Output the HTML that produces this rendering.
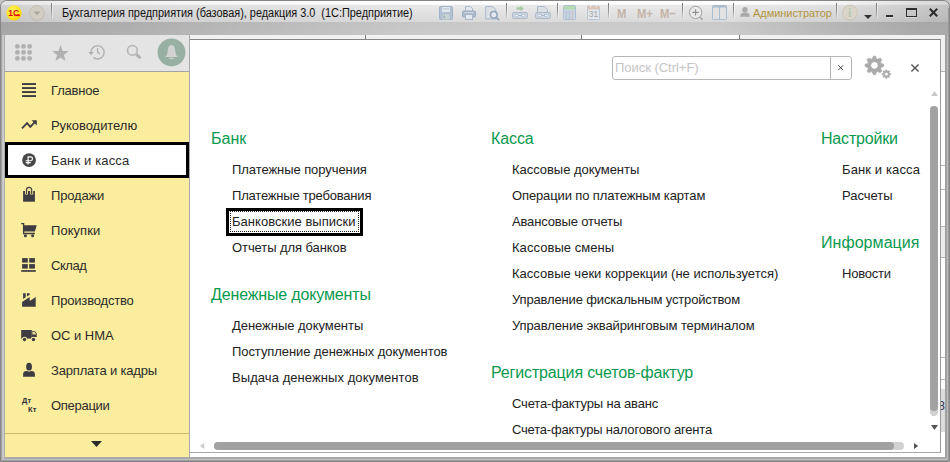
<!DOCTYPE html>
<html lang="ru">
<head>
<meta charset="utf-8">
<title>Бухгалтерия предприятия</title>
<style>
html,body{margin:0;padding:0;}
body{width:950px;height:462px;overflow:hidden;background:#c4c4c4;font-family:"Liberation Sans",sans-serif;position:relative;}
.abs{position:absolute;}
svg{position:absolute;overflow:visible;}
#frame{left:0;top:0;width:950px;height:462px;box-sizing:border-box;background:#c9c9c9;border:1px solid #868686;border-radius:7px 7px 0 0;}
#title{left:1px;top:1px;width:948px;height:21px;background:linear-gradient(90deg,rgba(0,0,0,.11) 0,rgba(0,0,0,.06) 60px,rgba(0,0,0,.03) 240px,rgba(0,0,0,0) 450px,rgba(0,0,0,0) 740px,rgba(0,0,0,.045) 840px,rgba(0,0,0,.11) 905px,rgba(0,0,0,.16) 948px),linear-gradient(#ffffff 0px,#ffffff 3.200px,#e9e9e9 4.400px,#dadada 21px);border-radius:6px 6px 0 0;}
#band{left:1px;top:22px;width:948px;height:13px;background:linear-gradient(90deg,rgba(0,0,0,.18) 0,rgba(0,0,0,.15) 100px,rgba(0,0,0,.09) 240px,rgba(0,0,0,.02) 400px,rgba(0,0,0,0) 480px,rgba(0,0,0,0) 720px,rgba(0,0,0,.07) 800px,rgba(0,0,0,.17) 920px),linear-gradient(#c9c9c9,#cdcdcd);}
#ttext{left:62px;top:6px;font-size:12px;line-height:14px;color:#111;white-space:pre;transform-origin:0 0;transform:scaleX(0.908);}
.sep{position:absolute;top:3px;width:1px;height:15px;background:linear-gradient(#7a7a7a,#949494 55%,rgba(160,160,160,.2));box-shadow:1px 0 0 rgba(255,255,255,.45);}
#admin{left:753px;top:6.300px;font-size:11.500px;line-height:14px;color:#b4933a;white-space:pre;transform-origin:0 0;transform:scaleX(0.95);}
.mm{position:absolute;top:5.600px;font-size:12.500px;line-height:14px;font-weight:bold;color:#c4b4a9;white-space:pre;transform-origin:0 0;transform:scale(0.9,1.06);}
#under{left:5px;top:35px;width:940px;height:422px;background:linear-gradient(#f1f1f1 0,#f1f1f1 36px,#fff 36px);}
#sidetool{left:5px;top:35px;width:184px;height:36px;background:#e4e4e4;}
#sideline{left:5px;top:71px;width:184px;height:1px;background:#a3a3a3;}
#side{left:5px;top:72px;width:184px;height:385px;background:#fbed9e;}
#sideedge{left:189px;top:35px;width:1px;height:422px;background:#a8a8ac;}
#sidesep{left:5px;top:433px;width:184px;height:1px;background:#cdb971;}
.it{position:absolute;left:51px;font-size:13px;line-height:16px;color:#2b2b2b;white-space:nowrap;letter-spacing:-0.18px;}
#sel{left:5px;top:142px;width:178px;height:30px;border:3px solid #000;background:#fff;}
#panel{left:190px;top:39px;width:750px;height:412px;background:#fff;border-top:1px solid #868686;border-right:1px solid #999;border-bottom:1px solid #aaa;}
.h{position:absolute;font-size:16px;line-height:20px;color:#0a9a4e;white-space:nowrap;}
.l{position:absolute;font-size:13px;line-height:16px;color:#222;white-space:nowrap;}
#search{left:612px;top:56px;width:238px;height:22px;border:1px solid #b6b6b6;border-radius:3px;background:#fff;}
#search i{position:absolute;left:217px;top:0;width:1px;height:22px;background:#b6b6b6;}
#ph{left:615px;letter-spacing:-0.030px;top:60px;font-size:13px;line-height:16px;color:#c4c4c4;white-space:nowrap;}
#focus{left:226.400px;top:207.500px;width:130.600px;height:22.200px;border:3px solid #000;}
#focus i{position:absolute;left:0.700px;top:0.700px;right:0.700px;bottom:0.700px;border:1px dotted #222;}
</style>
</head>
<body>
<div id="frame" class="abs"></div>
<div id="title" class="abs"></div>
<div id="band" class="abs"></div>

<!-- 1C logo -->
<svg style="left:6px;top:5px" width="16" height="16" viewBox="0 0 16 16">
<defs><radialGradient id="lg" cx="0.4" cy="0.35" r="0.75"><stop offset="0" stop-color="#fff36a"/><stop offset="0.6" stop-color="#ffe41a"/><stop offset="1" stop-color="#f5c800"/></radialGradient></defs>
<circle cx="8" cy="7.8" r="7.6" fill="url(#lg)"/>
<text x="2.2" y="11" font-family="Liberation Sans, sans-serif" font-weight="bold" font-size="8.5" fill="#e30613">1С</text>
<rect x="8.5" y="9.6" width="5.3" height="1.5" fill="#e30613"/>
</svg>
<!-- dropdown round button -->
<svg style="left:29px;top:5px" width="16" height="16" viewBox="0 0 16 16">
<circle cx="8" cy="8" r="7.4" fill="#d3cec4" stroke="#bdb8ae" stroke-width="0.8"/>
<path d="M4.6 6.6h6.8L8 10.2z" fill="#a9a6a0"/>
</svg>
<div class="sep" style="left:51px"></div>
<div id="ttext" class="abs">Бухгалтерия предприятия (базовая), редакция 3.0  (1С:Предприятие)</div>

<!-- toolbar icons (disabled look) -->
<!-- save -->
<svg style="left:439px;top:6px" width="14" height="14" viewBox="0 0 14 14">
<rect x="0.5" y="0.5" width="13" height="13" rx="1" fill="#b3c0d2" stroke="#a2b2c8"/>
<rect x="3" y="1" width="8" height="5" fill="#dfe5ec"/>
<rect x="4" y="2.5" width="6" height="0.8" fill="#b3c0d2"/>
<rect x="3.5" y="8.5" width="7" height="5" fill="#c9d6cf"/>
<rect x="4.5" y="9.5" width="1.6" height="3" fill="#9fb0c4"/>
</svg>
<!-- printer -->
<svg style="left:462px;top:6px" width="14" height="14" viewBox="0 0 14 14">
<path d="M3.5 0.5h5l2 2V6h-7z" fill="#e4e8ee" stroke="#a9b8cb"/>
<rect x="0.5" y="5" width="13" height="6" rx="1.2" fill="#a9b8cb" stroke="#9badc2"/>
<rect x="2" y="6.2" width="10" height="0.9" fill="#d6dde6"/>
<rect x="3.5" y="8.5" width="7" height="5" fill="#e4e8ee" stroke="#a9b8cb"/>
</svg>
<!-- preview -->
<svg style="left:485px;top:6px" width="15" height="15" viewBox="0 0 15 15">
<path d="M0.7 0.5h7l3 3v9.5h-10z" fill="#dcdfe3" stroke="#a9b8cb"/>
<circle cx="8.800" cy="8.800" r="3.300" fill="#e6eaee" stroke="#93a5ba" stroke-width="1.600"/>
<path d="M11.200 11.300l2.800 2.800" stroke="#93a5ba" stroke-width="1.900"/>
</svg>
<div class="sep" style="left:506px"></div>
<!-- link with arrow -->
<svg style="left:512px;top:5px" width="16" height="15" viewBox="0 0 16 15">
<path d="M4.5 2.3h4V0.5l3.3 3-3.3 3V4.7h-4z" fill="#a9c9a4"/>
<rect x="0.7" y="7.7" width="14.6" height="5.6" rx="1.6" fill="#d9dfe7" stroke="#a9b8cb" stroke-width="1.2"/>
<rect x="3" y="9.6" width="3.6" height="1.8" fill="#eef1f4" stroke="#a9b8cb" stroke-width="0.6"/>
<rect x="9.4" y="9.6" width="3.6" height="1.8" fill="#eef1f4" stroke="#a9b8cb" stroke-width="0.6"/>
<rect x="6" y="10" width="4" height="1" fill="#a9b8cb"/>
</svg>
<!-- doc with link -->
<svg style="left:535px;top:5px" width="16" height="15" viewBox="0 0 16 15">
<path d="M2.5 1.5h7l3 3V9h-10z" fill="#dcdfe3" stroke="#a9b8cb"/>
<rect x="0.7" y="7.7" width="14.6" height="5.6" rx="1.6" fill="#d9dfe7" stroke="#a9b8cb" stroke-width="1.2"/>
<rect x="3" y="9.6" width="3.6" height="1.8" fill="#eef1f4" stroke="#a9b8cb" stroke-width="0.6"/>
<rect x="9.4" y="9.6" width="3.6" height="1.8" fill="#eef1f4" stroke="#a9b8cb" stroke-width="0.6"/>
<rect x="6" y="10" width="4" height="1" fill="#a9b8cb"/>
</svg>
<div class="sep" style="left:557px"></div>
<!-- calculator -->
<svg style="left:563px;top:5px" width="13" height="15" viewBox="0 0 13 15">
<rect x="0.5" y="0.5" width="12" height="14" rx="1" fill="#c9d6e4" stroke="#aebfd2"/>
<rect x="1" y="1" width="11" height="3.6" fill="#b4dcb0"/>
<g fill="#a8b4c2"><rect x="2.5" y="6.3" width="1.6" height="1"/><rect x="5.6" y="6.3" width="1.6" height="1"/><rect x="2.5" y="8.4" width="1.6" height="1"/><rect x="5.6" y="8.4" width="1.6" height="1"/><rect x="2.5" y="10.5" width="1.6" height="1"/><rect x="5.6" y="10.5" width="1.6" height="1"/><rect x="2.5" y="12.5" width="1.6" height="1"/><rect x="5.6" y="12.5" width="1.6" height="1"/></g>
<g fill="#d9a9a4"><rect x="8.8" y="6.3" width="1.4" height="1"/><rect x="8.8" y="8.4" width="1.4" height="1"/><rect x="8.8" y="10.5" width="1.4" height="1"/><rect x="8.8" y="12.5" width="1.4" height="1"/></g>
</svg>
<!-- calendar -->
<svg style="left:587px;top:5px" width="13" height="15" viewBox="0 0 13 15">
<rect x="0.5" y="1" width="12" height="13.5" rx="1" fill="#e3e6ea" stroke="#b8c6d6"/>
<rect x="0.5" y="1" width="12" height="3.4" fill="#dcc3b8"/>
<rect x="3" y="0" width="1.2" height="2.4" fill="#f2ece8"/><rect x="8.8" y="0" width="1.2" height="2.4" fill="#f2ece8"/>
<text x="1.8" y="12.4" font-family="Liberation Sans, sans-serif" font-size="8.5" fill="#a7a7a7">31</text>
</svg>
<div class="sep" style="left:608px"></div>
<div class="mm" style="left:616.500px">M</div>
<div class="mm" style="left:636.500px">M+</div>
<div class="mm" style="left:659.800px">M−</div>
<div class="sep" style="left:682px"></div>
<!-- zoom -->
<svg style="left:688px;top:5px" width="16" height="16" viewBox="0 0 16 16">
<circle cx="7.6" cy="7.4" r="6.2" fill="#e9e9e9" stroke="#a2a2a2" stroke-width="1"/>
<path d="M4.4 7.4h6.4M7.6 4.2v6.4" stroke="#8e8e8e" stroke-width="1.1"/>
<path d="M12 12l2.6 2.6" stroke="#a8a8a8" stroke-width="1.6"/>
</svg>
<!-- split -->
<svg style="left:712px;top:5px" width="15" height="15" viewBox="0 0 15 15">
<rect x="0.5" y="0.5" width="14" height="14" rx="1" fill="#e2e2e2" stroke="#a9bdd0"/>
<rect x="0.5" y="0.5" width="14" height="2" fill="#a9bdd0"/>
<rect x="7" y="2" width="1" height="12.5" fill="#a9bdd0"/>
</svg>
<div class="sep" style="left:733px"></div>
<!-- user -->
<svg style="left:740px;top:7px" width="10" height="10" viewBox="0 0 10 10">
<circle cx="5" cy="2.8" r="2.7" fill="#a9a9a9"/>
<path d="M0.2 9.8c0-3 1.6-4.3 4.8-4.3s4.8 1.300 4.800 4.300z" fill="#a9a9a9"/>
</svg>
<div id="admin" class="abs">Администратор</div>
<div class="sep" style="left:836px"></div>
<!-- info -->
<svg style="left:842px;top:4px" width="17" height="17" viewBox="0 0 17 17">
<circle cx="8" cy="8.600" r="7.400" fill="#dad5c9" stroke="#c9c2b2" stroke-width="0.900"/>
<text x="6.100" y="13" font-family="Liberation Serif, serif" font-weight="bold" font-size="12.500" fill="#b7c6b1">i</text>
</svg>
<svg style="left:864px;top:15px" width="8" height="4" viewBox="0 0 8 4"><path d="M0 0h8L4 4z" fill="#333"/></svg>
<div class="sep" style="left:876px"></div>
<!-- window controls -->
<div class="abs" style="left:886px;top:14.800px;width:7.100px;height:2.400px;background:#2e2e2e;box-shadow:0 1px 0 rgba(255,255,255,.35)"></div>
<div class="abs" style="left:906px;top:7.800px;width:8.900px;height:6.700px;border:1px solid #2e2e2e;border-top-width:2px;box-shadow:0 1px 0 rgba(255,255,255,.35)"></div>
<svg style="left:929.200px;top:7.900px" width="9" height="9" viewBox="0 0 9 9"><path d="M0.800 0.800l7.400 7.400M8.200 0.800l-7.400 7.400" stroke="#2b2b2b" stroke-width="2"/></svg>

<!-- underlying page remnants -->
<div id="under" class="abs"></div>
<div class="abs" style="left:582px;top:35px;width:158px;height:4px;background:#fff"></div>
<div class="abs" style="left:365px;top:35px;width:1px;height:4px;background:#777"></div>
<div class="abs" style="left:581px;top:35px;width:1px;height:4px;background:#777"></div>
<div class="abs" style="left:739px;top:35px;width:1px;height:4px;background:#777"></div>
<div class="abs" style="left:941px;top:71px;width:4px;height:385px;background:#fff"></div>
<div class="abs" style="left:941px;top:71px;width:4px;height:1px;background:#b0b0b0"></div>
<div class="abs" style="left:941px;top:165px;width:4px;height:1px;background:#b0b0b0"></div>
<div class="abs" style="left:941px;top:189px;width:4px;height:1px;background:#b0b0b0"></div>
<div class="abs" style="left:941px;top:226px;width:4px;height:32px;background:#ececec;border-top:1px solid #b0b0b0;border-bottom:1px solid #b0b0b0;box-sizing:border-box"></div>
<div class="abs" style="left:941px;top:357px;width:4px;height:1px;background:#b0b0b0"></div>
<div class="abs" style="left:941px;top:379px;width:4px;height:1px;background:#b0b0b0"></div>
<div class="abs" style="left:941px;top:389px;width:4px;height:43px;background:#dcdcdc"></div>
<div class="abs" style="left:936px;top:398px;font-size:13px;line-height:16px;color:#2c3350;width:9px;overflow:hidden;text-align:right">8</div>
<div class="abs" style="left:945px;top:35px;width:1.500px;height:423px;background:#a0a0a0"></div>
<div class="abs" style="left:946.500px;top:35px;width:1.500px;height:424px;background:#bdbdbd"></div>
<div class="abs" style="left:948px;top:8px;width:1px;height:453px;background:#9a9a9a"></div>
<div class="abs" style="left:4px;top:457px;width:942.500px;height:1.500px;background:#a8a8a8"></div>
<div class="abs" style="left:2px;top:458.500px;width:946px;height:1.500px;background:#c2c2c2"></div>
<div class="abs" style="left:1px;top:460px;width:948px;height:1px;background:#9a9a9a"></div>
<div class="abs" style="left:4px;top:35px;width:1px;height:423px;background:#adadad"></div>
<div class="abs" style="left:1px;top:22px;width:1px;height:439px;background:#a4a4a4"></div>
<div class="abs" style="left:2px;top:35px;width:2px;height:424px;background:linear-gradient(90deg,#c0c0c0,#d0d0d0)"></div>

<!-- sidebar -->
<div id="sidetool" class="abs"></div>
<div id="sideline" class="abs"></div>
<div id="side" class="abs"></div>
<div id="sideedge" class="abs"></div>
<div id="sidesep" class="abs"></div>
<svg style="left:91px;top:441px" width="11" height="6" viewBox="0 0 11 6"><path d="M0 0h11L5.500 6z" fill="#2b2b2b"/></svg>

<!-- sidebar top tools -->
<svg style="left:14px;top:43px" width="19" height="19" viewBox="0 0 19 19" fill="#b1b1b1">
<circle cx="3.400" cy="3.400" r="2.400"/><circle cx="9.500" cy="3.400" r="2.400"/><circle cx="15.600" cy="3.400" r="2.400"/>
<circle cx="3.400" cy="9.400" r="2.400"/><circle cx="9.500" cy="9.400" r="2.400"/><circle cx="15.600" cy="9.400" r="2.400"/>
<circle cx="3.400" cy="15.400" r="2.400"/><circle cx="9.500" cy="15.400" r="2.400"/><circle cx="15.600" cy="15.400" r="2.400"/>
</svg>
<svg style="left:52px;top:45px" width="17" height="16" viewBox="0 0 17 16"><path d="M8.500 0l2.100 5.900 6.200 0.200-4.900 3.800 1.700 6-5.100-3.500-5.100 3.500 1.700-6L0.200 6.100l6.200-0.200z" fill="#b1b1b1"/></svg>
<svg style="left:0;top:0" width="200" height="72" viewBox="0 0 200 72">
<path d="M91 52.300A6.600 6.600 0 1 1 93.400 57.400" fill="none" stroke="#b1b1b1" stroke-width="1.450"/>
<path d="M88.200 52.100h5.600L91 55.200z" fill="#b1b1b1"/>
<path d="M97.600 48.100v4l2.300 2" fill="none" stroke="#b1b1b1" stroke-width="1.300"/>
<circle cx="132.400" cy="50.400" r="4.850" fill="none" stroke="#b1b1b1" stroke-width="1.500"/>
<path d="M136.400 54.400l4 3.900" stroke="#b1b1b1" stroke-width="3"/>
</svg>
<svg style="left:0;top:0" width="200" height="72" viewBox="0 0 200 72">
<circle cx="171.500" cy="52.400" r="13.900" fill="#97b0a3"/>
<path d="M171.500 45c1.900 0 3.100 1.500 3.500 4.100l0.700 4.500c0.300 1.700 1 2.600 2.400 3.500H164.900c1.400-0.900 2.100-1.800 2.400-3.500l0.700-4.500c0.400-2.600 1.600-4.100 3.500-4.100z" fill="#d2d2d2"/>
<rect x="169.200" y="57.700" width="4.600" height="1.300" rx="0.600" fill="#d2d2d2"/>
</svg>

<div id="sel" class="abs"></div>
<div class="it" style="top:83px;letter-spacing:-0.180px">Главное</div>
<div class="it" style="top:118px;letter-spacing:-0.053px">Руководителю</div>
<div class="it" style="top:153px;letter-spacing:0.147px">Банк и касса</div>
<div class="it" style="top:188px;letter-spacing:-0.180px">Продажи</div>
<div class="it" style="top:223px;letter-spacing:0.053px">Покупки</div>
<div class="it" style="top:258px;letter-spacing:-0.430px">Склад</div>
<div class="it" style="top:293px;letter-spacing:-0.180px">Производство</div>
<div class="it" style="top:328px;letter-spacing:-0.037px">ОС и НМА</div>
<div class="it" style="top:363px;letter-spacing:-0.180px">Зарплата и кадры</div>
<div class="it" style="top:398px;letter-spacing:-0.280px">Операции</div>

<!-- sidebar icons -->
<svg style="left:0;top:0" width="200" height="462" viewBox="0 0 200 462">
<g fill="#3c3c42">
<!-- hamburger -->
<rect x="22" y="83.100" width="14" height="1.900"/><rect x="22" y="87.100" width="14" height="1.900"/><rect x="22" y="91.100" width="14" height="1.900"/><rect x="22" y="95.100" width="14" height="1.900"/>
<!-- trending -->
<path d="M22 128.300L27.100 123.100 30.300 126.800 35 121.800" fill="none" stroke="#3c3c42" stroke-width="1.800"/>
<path d="M31.600 120.200H36.800V125.600z"/>
<!-- ruble -->
<circle cx="29.050" cy="160.050" r="6.900" fill="#474747"/>
<path d="M28.100 164.600V156.900h2.500a1.900 1.900 0 0 1 0 3.800H25.600M25.600 162.600h5.200" fill="none" stroke="#fff" stroke-width="1.150"/>
<!-- bag -->
<rect x="23.100" y="191" width="11.800" height="10.700"/>
<path d="M26.500 194.500V190a2.600 2.600 0 0 1 5.200 0v4.500" fill="none" stroke="#fbed9e" stroke-width="3"/>
<path d="M26.500 194V190a2.600 2.600 0 0 1 5.200 0v4" fill="none" stroke="#3c3c42" stroke-width="1.200"/>
<!-- cart -->
<path d="M21.200 223.600h2.400v9.900h11.300" fill="none" stroke="#3c3c42" stroke-width="1.300"/>
<path d="M23.200 225.300h13.500l-1.800 6.300H23.200z"/>
<circle cx="25.400" cy="235.700" r="1.500"/><circle cx="32.600" cy="235.700" r="1.500"/>
<!-- warehouse -->
<rect x="22.100" y="258.100" width="5.700" height="4.500"/><rect x="29.200" y="258.100" width="5.700" height="4.500"/>
<rect x="22.100" y="264.100" width="5.700" height="4.500"/><rect x="29.200" y="264.100" width="5.700" height="4.500"/>
<rect x="21.200" y="270.100" width="14.600" height="1.700"/>
<!-- factory -->
<path d="M22.100 306.800V301.900L29.700 297v4L35.700 297v9.800z"/>
<path d="M23.100 293.200h2.600v4.100l-2.600 1.700z"/>
<path d="M26.900 293.200h2.800v1.500l-2.800 1.900z"/>
<!-- truck -->
<rect x="21.200" y="330" width="10.600" height="8.600"/>
<path d="M31.800 331.300h3.300l1.600 2.200v3.600h-4.900z"/>
<path d="M32.400 332.100h2.500l0.900 1.300v1.100h-3.400z" fill="#e9dc95"/>
<circle cx="24.500" cy="339.400" r="2.600" fill="#fbed9e"/><circle cx="33.500" cy="339.400" r="2.600" fill="#fbed9e"/>
<circle cx="24.500" cy="339.500" r="1.700"/><circle cx="33.500" cy="339.500" r="1.700"/>
<!-- person -->
<path d="M23.100 376.700v-2.600c0-1.800 1.400-3.100 3.200-3.100h5.400c1.800 0 3.200 1.300 3.200 3.100v2.600z"/>
<ellipse cx="29.050" cy="366.900" rx="3.700" ry="4.800" fill="#fbed9e"/>
<ellipse cx="29.050" cy="366.700" rx="2.900" ry="3.900"/>
</g>
</svg>
<div class="abs" style="left:22px;top:396px;font-size:7.500px;line-height:9px;font-weight:bold;color:#2f2f35;white-space:nowrap;letter-spacing:0.200px">Дт</div>
<div class="abs" style="left:28px;top:404.500px;font-size:7.500px;line-height:9px;font-weight:bold;color:#2f2f35;white-space:nowrap;letter-spacing:0.100px">Кт</div>

<!-- main panel -->
<div id="panel" class="abs"></div>
<div id="search" class="abs"><i></i></div>
<div id="ph" class="abs">Поиск (Ctrl+F)</div>
<svg style="left:837.800px;top:64.900px" width="5.400" height="5.400" viewBox="0 0 5.400 5.400"><path d="M0.300 0.300l4.800 4.800M5.100 0.300l-4.800 4.800" stroke="#444" stroke-width="1"/></svg>
<!-- gears -->
<svg style="left:0;top:0" width="950" height="100" viewBox="0 0 950 100">
<path d="M872.15 58.88 L873.34 56.06 L875.46 56.06 L876.65 58.88 L877.42 59.20 L880.25 58.04 L881.76 59.55 L880.60 62.38 L880.92 63.15 L883.74 64.34 L883.74 66.46 L880.92 67.65 L880.60 68.42 L881.76 71.25 L880.25 72.76 L877.42 71.60 L876.65 71.92 L875.46 74.74 L873.34 74.74 L872.15 71.92 L871.38 71.60 L868.55 72.76 L867.04 71.25 L868.20 68.42 L867.88 67.65 L865.06 66.46 L865.06 64.34 L867.88 63.15 L868.20 62.38 L867.04 59.55 L868.55 58.04 L871.38 59.20z M874.400 61.750a3.650 3.650 0 1 0 0.010 0z" fill="#ababab" fill-rule="evenodd" stroke="#ababab" stroke-width="0.600" stroke-linejoin="round"/>
<path d="M885.39 71.17 L885.79 69.74 L887.01 69.74 L887.41 71.17 L887.76 71.31 L889.05 70.59 L889.91 71.45 L889.19 72.74 L889.33 73.09 L890.76 73.49 L890.76 74.71 L889.33 75.11 L889.19 75.46 L889.91 76.75 L889.05 77.61 L887.76 76.89 L887.41 77.03 L887.01 78.46 L885.79 78.46 L885.39 77.03 L885.04 76.89 L883.75 77.61 L882.89 76.75 L883.61 75.46 L883.47 75.11 L882.04 74.71 L882.04 73.49 L883.47 73.09 L883.61 72.74 L882.89 71.45 L883.75 70.59 L885.04 71.31z M886.400 72.450a1.650 1.650 0 1 0 0.010 0z" fill="#ababab" fill-rule="evenodd" stroke="#ababab" stroke-width="0.400" stroke-linejoin="round"/>
</svg>
<svg style="left:911px;top:64px" width="8" height="8" viewBox="0 0 8 8"><path d="M0.400 0.400l7.200 7.200M7.600 0.400l-7.200 7.200" stroke="#555" stroke-width="1.400"/></svg>

<!-- scrollbars -->
<svg style="left:931px;top:91px" width="7" height="5" viewBox="0 0 7 5"><path d="M0 5h7L3.500 0z" fill="#c9c9c9"/></svg>
<div class="abs" style="left:930.300px;top:105.500px;width:8px;height:310px;border-radius:4px;background:#d2d2d2"></div>
<div class="abs" style="left:930.300px;top:105.500px;width:8px;height:305.500px;border-radius:4px;background:#a2a2a2"></div>
<svg style="left:931px;top:425px" width="7" height="5" viewBox="0 0 7 5"><path d="M0 0h7L3.500 5z" fill="#555"/></svg>
<svg style="left:199.500px;top:443px" width="4.200" height="6" viewBox="0 0 4.200 6"><path d="M4.200 0v6L0 3z" fill="#c9c9c9"/></svg>
<div class="abs" style="left:214px;top:442px;width:690px;height:8px;border-radius:4px;background:#d2d2d2"></div>
<div class="abs" style="left:214px;top:442px;width:680px;height:8px;border-radius:4px;background:#a2a2a2"></div>
<svg style="left:914px;top:443px" width="4.200" height="6" viewBox="0 0 4.200 6"><path d="M0 0v6l4.200-3z" fill="#555"/></svg>

<div class="h" style="left:211px;top:129px;letter-spacing:0.000px">Банк</div>
<div class="l" style="left:232px;top:162px;letter-spacing:-0.070px">Платежные поручения</div>
<div class="l" style="left:232px;top:188px;letter-spacing:-0.200px">Платежные требования</div>
<div id="focus" class="abs"><i></i></div>
<div class="l" style="left:232px;top:214px;letter-spacing:0.030px">Банковские выписки</div>
<div class="l" style="left:232px;top:240px;letter-spacing:-0.080px">Отчеты для банков</div>
<div class="h" style="left:211px;top:285px;letter-spacing:-0.146px">Денежные документы</div>
<div class="l" style="left:232px;top:318px;letter-spacing:-0.044px">Денежные документы</div>
<div class="l" style="left:232px;top:344px;letter-spacing:-0.069px">Поступление денежных документов</div>
<div class="l" style="left:232px;top:370px;letter-spacing:0.070px">Выдача денежных документов</div>

<div class="h" style="left:491px;top:129px;letter-spacing:-0.100px">Касса</div>
<div class="l" style="left:512px;top:162px;letter-spacing:-0.040px">Кассовые документы</div>
<div class="l" style="left:512px;top:188px;letter-spacing:-0.123px">Операции по платежным картам</div>
<div class="l" style="left:512px;top:214px;letter-spacing:-0.154px">Авансовые отчеты</div>
<div class="l" style="left:512px;top:240px;letter-spacing:0.052px">Кассовые смены</div>
<div class="l" style="left:512px;top:266px;letter-spacing:0.010px">Кассовые чеки коррекции (не используется)</div>
<div class="l" style="left:512px;top:292px;letter-spacing:-0.149px">Управление фискальным устройством</div>
<div class="l" style="left:512px;top:318px;letter-spacing:-0.109px">Управление эквайринговым терминалом</div>
<div class="h" style="left:491px;top:363px;letter-spacing:-0.149px">Регистрация счетов-фактур</div>
<div class="l" style="left:512px;top:396px;letter-spacing:-0.155px">Счета-фактуры на аванс</div>
<div class="l" style="left:512px;top:422px;letter-spacing:-0.197px">Счета-фактуры налогового агента</div>

<div class="h" style="left:821px;top:129px;letter-spacing:-0.189px">Настройки</div>
<div class="l" style="left:842px;top:162px;letter-spacing:0.119px">Банк и касса</div>
<div class="l" style="left:842px;top:188px;letter-spacing:-0.034px">Расчеты</div>
<div class="h" style="left:821px;top:233px;letter-spacing:0.056px">Информация</div>
<div class="l" style="left:842px;top:266px;letter-spacing:-0.200px">Новости</div>
</body>
</html>
